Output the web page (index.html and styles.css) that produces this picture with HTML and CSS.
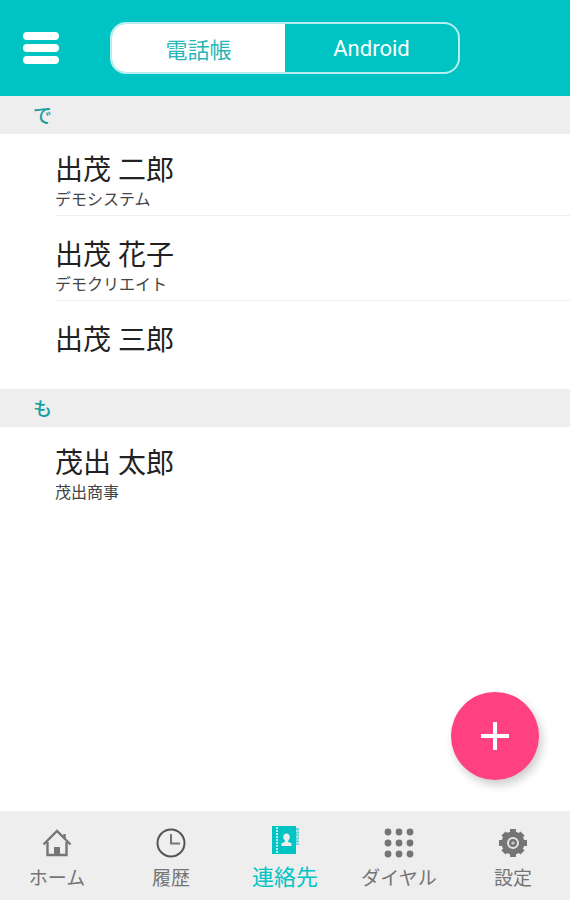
FILE: index.html
```
<!DOCTYPE html>
<html lang="ja">
<head>
    <meta charset="UTF-8">
    <meta name="viewport" content="width=device-width, initial-scale=1.0">
    <title>連絡先</title>
    <link rel="stylesheet" href="styles.css">
</head>
<body>

<header class="header">
    <button class="menu" type="button" aria-label="メニュー">
        <span></span>
        <span></span>
        <span></span>
    </button>
    <div class="switch">
        <button class="active" type="button">電話帳</button>
        <button type="button">Android</button>
    </div>
</header>

<main class="contacts">
    <h2>で</h2>
    <ul>
        <li>
            <div class="name">出茂 二郎</div>
            <div class="company">デモシステム</div>
        </li>
        <li>
            <div class="name">出茂 花子</div>
            <div class="company">デモクリエイト</div>
        </li>
        <li>
            <div class="name">出茂 三郎</div>
        </li>
    </ul>
    <h2>も</h2>
    <ul>
        <li>
            <div class="name">茂出 太郎</div>
            <div class="company">茂出商事</div>
        </li>
    </ul>
</main>

<button class="add" type="button" aria-label="連絡先を追加">
    <svg width="28" height="28" viewBox="0 0 28 28" stroke="#fff" stroke-width="4">
        <path d="M14 0v28M0 14h28"/>
    </svg>
</button>

<nav class="tabs">
    <a href="#home">
        <svg width="30" height="30" viewBox="0 0 30 30" fill="none" stroke="#757575" stroke-width="2.4">
            <path d="M1.500 16.500L15 3l13.500 13.500"/>
            <path d="M5.500 14v13h19V14"/>
            <path d="M22.500 6v4"/>
            <path d="M12 19h6v8h-6z" fill="#757575" stroke="none"/>
        </svg>
        ホーム
    </a>
    <a href="#history">
        <svg width="30" height="30" viewBox="0 0 30 30" fill="none" stroke="#555" stroke-width="2">
            <circle cx="15" cy="15" r="13.500"/>
            <path d="M15 6v9.500h9" stroke="#757575"/>
        </svg>
        履歴
    </a>
    <a class="active" href="#contacts">
        <svg width="30" height="30" viewBox="0 0 30 30">
            <path d="M2 1h24v28H2z" fill="#00c4c4"/>
            <path d="M7 2v26" stroke="#b5eeee" stroke-width="2" stroke-dasharray="2 1"/>
            <path d="M26 3h3v17h-3z" fill="#5fd5d5"/>
            <path d="M26 6h3M27 9h3M26 12h3M27 15h3M26 18h3" stroke="#eee" stroke-width="1"/>
            <path d="M16.500 8.500c2 0 3.300 1.500 3.300 3.500 0 1.500-.6 2.700-1.600 3.500v1.500l3.300 1.300V21h-10v-2.700l3.300-1.300v-1.500c-1-.8-1.600-2-1.600-3.500 0-2 1.300-3.500 3.300-3.500z" fill="#eee"/>
        </svg>
        連絡先
    </a>
    <a href="#dial">
        <svg width="30" height="30" viewBox="0 0 30 30" fill="#757575">
            <circle cx="4" cy="4" r="3.400"/>
            <circle cx="15" cy="4" r="3.400"/>
            <circle cx="26" cy="4" r="3.400"/>
            <circle cx="4" cy="15" r="3.400"/>
            <circle cx="15" cy="15" r="3.400"/>
            <circle cx="26" cy="15" r="3.400"/>
            <circle cx="4" cy="26" r="3.400"/>
            <circle cx="15" cy="26" r="3.400"/>
            <circle cx="26" cy="26" r="3.400"/>
        </svg>
        ダイヤル
    </a>
    <a href="#settings">
        <svg width="30" height="30" viewBox="0 0 30 30">
            <g stroke="#757575" stroke-width="6">
                <path d="M15 1v28M1 15h28M5.500 5.500l19 19M24.500 5.500l-19 19"/>
            </g>
            <circle cx="15" cy="15" r="11.500" fill="#757575"/>
            <circle cx="15" cy="15" r="5" fill="none" stroke="#e4e4e4" stroke-width="2"/>
            <circle cx="15" cy="15" r="1.600" fill="#ccc"/>
        </svg>
        設定
    </a>
</nav>

</body>
</html>
```

FILE: styles.css
```
* {
    box-sizing: border-box;
}
body {
    font-family: Roboto, "Noto Sans CJK JP", sans-serif;
    background-color: #fff;
    color: #222;
    margin: 0;
    min-height: 100vh;
    display: flex;
    flex-direction: column;
}
button {
    font-family: inherit;
    border: none;
    padding: 0;
    cursor: pointer;
}
.header {
    background-color: #00c4c4;
    display: grid;
    grid-template-columns: 1fr 350px 1fr;
    align-items: center;
    padding: 22px 0;
}
.menu {
    background: none;
    width: 36px;
    margin-left: 23px;
    display: flex;
    flex-direction: column;
    gap: 4px;
}
.menu span {
    height: 8px;
    border-radius: 4px;
    background-color: #fff;
}
.switch {
    display: flex;
    height: 52px;
    border: 2px solid #b5eeee;
    border-radius: 16px;
    overflow: hidden;
}
.switch button {
    flex: 1;
    background: none;
    color: #fff;
    font-size: 22px;
}
.switch .active {
    background-color: #fff;
    color: #2ab5b8;
}
.contacts {
    flex: 1;
}
.contacts h2 {
    margin: 0;
    padding: 4px 33px 0;
    background-color: #eee;
    color: #1a9da0;
    font-size: 19px;
    font-weight: 500;
    line-height: 34px;
}
.contacts ul {
    list-style: none;
    margin: 0;
    padding: 0 0 6px 55px;
}
.contacts li {
    min-height: 82px;
    padding: 19px 0 5px;
    border-bottom: 1px solid #eee;
}
.contacts li + li {
    padding-top: 22px;
}
.contacts li:last-child {
    border-bottom: none;
}
.name {
    font-size: 28px;
    line-height: 36px;
}
.company {
    color: #444;
    font-size: 16px;
    line-height: 21px;
}
.add {
    position: fixed;
    right: 31px;
    bottom: 120px;
    width: 88px;
    height: 88px;
    border-radius: 50%;
    background-color: #ff4081;
    box-shadow: 3px 5px 10px rgba(0, 0, 0, 0.2);
    display: flex;
    justify-content: center;
    align-items: center;
}
.tabs {
    background-color: #eee;
    display: flex;
    height: 89px;
}
.tabs a {
    flex: 1;
    display: flex;
    flex-direction: column;
    align-items: center;
    gap: 6px;
    padding-top: 17px;
    color: #757575;
    font-size: 19px;
    line-height: 30px;
    text-decoration: none;
}
.tabs .active {
    gap: 8px;
    padding-top: 14px;
    color: #00c4c4;
    font-size: 22px;
}
```
